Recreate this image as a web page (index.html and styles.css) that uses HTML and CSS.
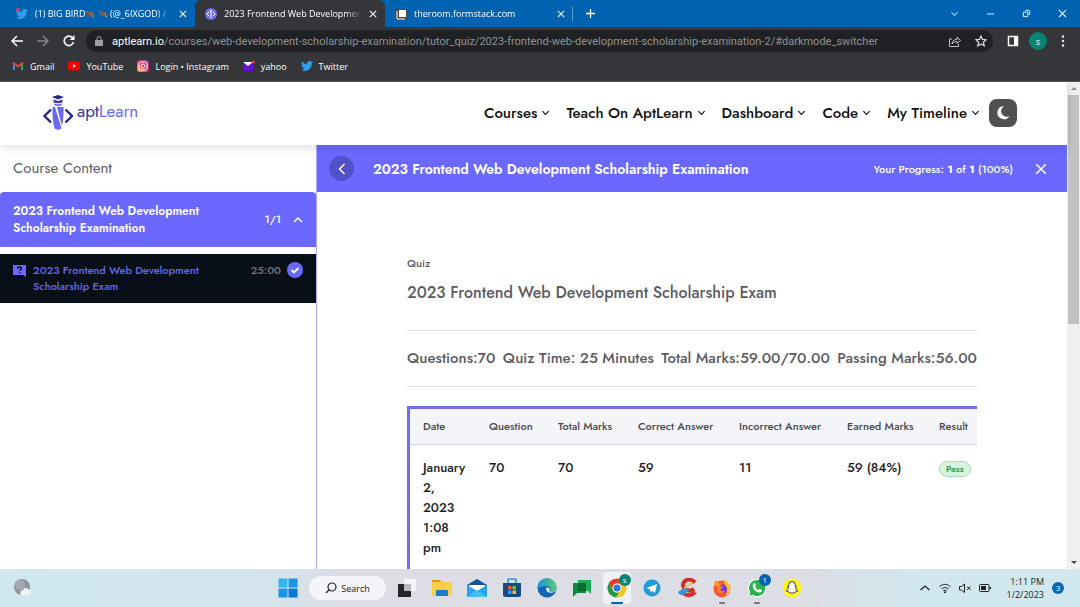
FILE: index.html
```html
<!DOCTYPE html>
<html lang="en">
<head>
    <meta charset="UTF-8">
    <meta name="viewport" content="width=device-width, initial-scale=1.0">
    <title>2023 Frontend Web Development Scholarship Exam</title>
    <link rel="stylesheet" href="styles.css">
</head>
<body>
    <!-- Shared symbols -->
    <svg class="symbols" aria-hidden="true">
        <symbol id="down" viewBox="0 0 10 10"><path d="M1.5 3.5 5 7l3.5-3.5" fill="none" stroke="currentColor" stroke-width="1.3"/></symbol>
        <symbol id="close" viewBox="0 0 10 10"><path d="m1 1 8 8M9 1 1 9" fill="none" stroke="currentColor" stroke-width="1.3"/></symbol>
        <symbol id="bird" viewBox="0 0 24 24"><path fill="#2d9fe8" d="M24 4.6a10 10 0 0 1-2.8.8 5 5 0 0 0 2.1-2.7 10 10 0 0 1-3.1 1.2 4.9 4.9 0 0 0-8.4 4.5A14 14 0 0 1 1.7 3.1a4.9 4.9 0 0 0 1.5 6.6 5 5 0 0 1-2.2-.6 4.9 4.9 0 0 0 3.9 4.9 5 5 0 0 1-2.2.1 4.9 4.9 0 0 0 4.6 3.4A9.9 9.9 0 0 1 0 19.5 14 14 0 0 0 21.500 7.100 10 10 0 0 0 24 4.600z"/></symbol>
        <symbol id="eagle" viewBox="0 0 12 12"><path fill="#84594a" d="M0 3q2-2 4 0l1 1q1-1 3-.5L10 5l2 .5-2 1 1 4-3-2-1 1-2-2-3 1 1.500-2.500Q1 5 0 3z"/><path fill="#c98b6b" d="m8 4 2 1-2 1zM8 8.500l3 2-1-3z"/></symbol>
    </svg>

    <header class="browser">
        <div class="tabs">
            <div class="tab">
                <svg class="fav" viewBox="0 0 12 12"><use href="#bird"/><circle cx="2" cy="2" r="2" fill="#d23d72"/></svg>
                <span class="tab-title">(1) BIG BIRD<svg class="emoji"><use href="#eagle"/></svg> <svg class="emoji"><use href="#eagle"/></svg> (@_6IXGOD) /</span>
                <button class="tab-close" aria-label="Close tab"><svg><use href="#close"/></svg></button>
            </div>
            <div class="tab active">
                <svg class="fav" viewBox="0 0 12 12"><circle cx="6" cy="6" r="6" fill="#7472ef"/><path d="M4 4 2 6l2 2M8 4l2 2-2 2M6 2v8M5 3h2" fill="none" stroke="#fff"/></svg>
                <span class="tab-title">2023 Frontend Web Development</span>
                <button class="tab-close" aria-label="Close tab"><svg><use href="#close"/></svg></button>
            </div>
            <div class="tab last">
                <svg class="fav" viewBox="0 0 12 12"><rect x="1" y="1" width="11" height="11" rx="1" fill="#54433c"/><path d="M4 2h7v7H4z" fill="#fff"/><path d="M2 3v8h8" fill="none" stroke="#fff"/></svg>
                <span class="tab-title">theroom.formstack.com</span>
                <button class="tab-close" aria-label="Close tab"><svg><use href="#close"/></svg></button>
            </div>
            <button class="new-tab" aria-label="New tab"><svg viewBox="0 0 10 10"><path d="M5 0v10M0 5h10" stroke="#fff" stroke-width="1.500"/></svg></button>
            <div class="window-buttons">
                <button class="tab-search" aria-label="Search tabs"><svg><use href="#down"/></svg></button>
                <button aria-label="Minimize"><svg viewBox="0 0 10 10"><path d="M1 5.500h8" stroke="#fff"/></svg></button>
                <button aria-label="Restore"><svg viewBox="0 0 10 10"><path d="M1.500 3.500h5v5h-5zM3.500 1.500h4a1 1 0 0 1 1 1v4" fill="none" stroke="#fff"/></svg></button>
                <button aria-label="Close"><svg><use href="#close"/></svg></button>
            </div>
        </div>

        <div class="toolbar">
            <button class="tool" aria-label="Back"><svg viewBox="0 0 12 12"><path d="M12 6H1M6 1 1 6l5 5" fill="none" stroke="#fff" stroke-width="1.500"/></svg></button>
            <button class="tool" aria-label="Forward"><svg viewBox="0 0 12 12"><path d="M0 6h11M6 1l5 5-5 5" fill="none" stroke="#85868a" stroke-width="1.500"/></svg></button>
            <button class="tool" aria-label="Reload"><svg viewBox="0 0 12 12"><path d="M10.500 7A4.700 4.700 0 1 1 9.500 2.800" fill="none" stroke="#fff" stroke-width="1.600"/><path d="M11.500 0v5h-5z" fill="#fff"/></svg></button>
            <div class="address">
                <svg class="lock" viewBox="0 0 8 10"><path d="M0 4h8v6H0z" fill="#a0a1a4"/><path d="M2 4V2.500a2 2 0 0 1 4 0V4" fill="none" stroke="#a0a1a4"/></svg>
                <label for="url">aptlearn.io</label>
                <input id="url" type="text" value="/courses/web-development-scholarship-examination/tutor_quiz/2023-frontend-web-development-scholarship-examination-2/#darkmode_switcher">
                <button class="tool" aria-label="Share"><svg viewBox="0 0 12 12"><path d="M3 4H.5v7.500h9V9M3 9c0-3 2-4.500 5-4.500V2l3.500 3.500L8 8.500V6.500C6 6.500 4.500 7 3 9z" fill="none" stroke="#c0c1c3"/></svg></button>
                <button class="tool" aria-label="Bookmark"><svg viewBox="0 0 12 12"><path d="m6 1 1.500 3.400 3.700.3-2.800 2.500.9 3.700L6 9l-3.300 1.900.9-3.700L.8 4.700l3.700-.3z" fill="none" stroke="#dcdde0" stroke-width="1.200"/></svg></button>
            </div>
            <div class="toolbar-end">
                <button class="tool" aria-label="Side panel"><svg viewBox="0 0 12 12"><path d="M1.500 1.500h9v9h-9z" fill="none" stroke="#fff" stroke-width="1.500"/><path d="M7 1h4v10H7z" fill="#fff"/></svg></button>
                <button class="profile">s</button>
                <button class="tool" aria-label="Menu"><svg viewBox="0 0 12 12" fill="#eee"><circle cx="6" cy="1.500" r="1.200"/><circle cx="6" cy="6" r="1.200"/><circle cx="6" cy="10.500" r="1.200"/></svg></button>
            </div>
        </div>

        <nav class="bookmarks">
            <a href="#"><svg viewBox="0 0 12 12"><path d="M1 2.500V10h2V5.500z" fill="#4285f4"/><path d="M11 2.500V10H9V5.500z" fill="#34a853"/><path d="M1 2.500 6 6.500l5-4" fill="none" stroke="#ea4335" stroke-width="2"/></svg>Gmail</a>
            <a href="#"><svg viewBox="0 0 12 12"><rect y="1.500" width="12" height="9" rx="2" fill="#f00"/><path d="m5 4 3 2-3 2z" fill="#fff"/></svg>YouTube</a>
            <a href="#"><svg viewBox="0 0 12 12"><defs><linearGradient id="insta" x1="0" y1="1" x2="1" y2="0"><stop offset="0" stop-color="#fdc04b"/><stop offset=".5" stop-color="#ef3564"/><stop offset="1" stop-color="#8b3fd0"/></linearGradient></defs><rect width="12" height="12" rx="3" fill="url(#insta)"/><rect x="2" y="2" width="8" height="8" rx="2.500" fill="none" stroke="#fff"/><circle cx="6" cy="6" r="1.900" fill="none" stroke="#fff"/></svg>Login • Instagram</a>
            <a href="#"><svg viewBox="0 0 12 12"><path d="M1 2h9v9H1z" fill="#6410d8"/><path d="m0 2 5 4 5-4z" fill="#fff"/><circle cx="10.500" cy="2" r="1.500" fill="#f23b3b"/></svg>yahoo</a>
            <a href="#"><svg viewBox="0 0 12 12"><use href="#bird"/></svg>Twitter</a>
        </nav>
    </header>

    <div class="viewport">
        <div class="site">
            <header class="site-header">
                <a class="logo" href="#" aria-label="aptLearn">
                    <svg viewBox="0 0 30 36">
                        <path d="m15 0 6 2-6 2.500L9 2z" fill="#28277f"/>
                        <path d="M10.500 4.500 15 6l4.500-1.500v3Q15 9 10.500 7.500z" fill="#3c3bad"/>
                        <path d="M10.500 8.500q4.500 1.500 9 0Q18.500 11 15 11t-4.500-2.500z" fill="#6a68f5"/>
                        <path d="M9.500 12H12l6.500 21.500L15 35l-3.500-1.500Q9 24 9.500 12zM14 12h6.500q.5 11-1.500 19z" fill="#6a68f5"/>
                        <path d="M8 14.500 1.500 21 8 27.500M22.500 14.500 29 21l-6.500 6.500" fill="none" stroke="#28277f" stroke-width="2.400"/>
                    </svg>
                    <span class="logo-text"><span class="dark">apt</span>Learn</span>
                </a>
                <nav class="menu">
                    <a href="#">Courses<svg><use href="#down"/></svg></a>
                    <a href="#">Teach On AptLearn<svg><use href="#down"/></svg></a>
                    <a href="#">Dashboard<svg><use href="#down"/></svg></a>
                    <a href="#">Code<svg><use href="#down"/></svg></a>
                    <a href="#">My Timeline<svg><use href="#down"/></svg></a>
                </nav>
                <button class="dark-toggle" aria-label="Dark mode"><svg viewBox="0 0 16 16"><path d="M9 1.200A6.500 6.500 0 1 0 14.500 11 5.500 5.500 0 0 1 9 1.200z" fill="#fff"/></svg></button>
            </header>

            <div class="course">
                <aside class="sidebar">
                    <h2 class="sidebar-title">Course Content</h2>
                    <button class="topic">
                        <span class="topic-name">2023 Frontend Web Development Scholarship Examination</span>
                        <span class="topic-count">1/1</span>
                        <svg viewBox="0 0 10 10"><path d="m1 7 4-4 4 4" fill="none" stroke="#fff" stroke-width="1.500"/></svg>
                    </button>
                    <a class="lesson" href="#">
                        <svg class="lesson-icon" viewBox="0 0 13 12"><path d="M0 0h13v12l-3-2H0z" fill="#6a68fa"/><path d="M4.500 3.500q0-1.500 2-1.500t2 1.500q0 1-1.500 1.500v1M7 7v1.200" fill="none" stroke="#080f19" stroke-width="1.300"/></svg>
                        <span class="lesson-name">2023 Frontend Web Development Scholarship Exam</span>
                        <span class="lesson-time">25:00</span>
                        <svg class="lesson-done" viewBox="0 0 16 16"><circle cx="8" cy="8" r="8" fill="#6a68fa"/><path d="m4.500 8 2.500 2.500 4.500-4.500" fill="none" stroke="#fff" stroke-width="1.800"/></svg>
                    </a>
                </aside>

                <main class="main">
                    <div class="course-bar">
                        <button class="back" aria-label="Back"><svg viewBox="0 0 12 12"><path d="M8.500 1 3.500 6l5 5" fill="none" stroke="#fff" stroke-width="1.500"/></svg></button>
                        <h1>2023 Frontend Web Development Scholarship Examination</h1>
                        <p class="progress">Your Progress: <b>1</b> of <b>1</b> (100%)</p>
                        <button class="exit" aria-label="Close course"><svg><use href="#close"/></svg></button>
                    </div>

                    <section class="quiz">
                        <p class="kind">Quiz</p>
                        <h2 class="quiz-title">2023 Frontend Web Development Scholarship Exam</h2>
                        <ul class="facts">
                            <li>Questions:70</li>
                            <li>Quiz Time: 25 Minutes</li>
                            <li>Total Marks:59.00/70.00</li>
                            <li>Passing Marks:56.00</li>
                        </ul>
                        <div class="attempts">
                            <table>
                                <thead>
                                    <tr>
                                        <th class="col-date">Date</th>
                                        <th class="col-question">Question</th>
                                        <th class="col-total">Total Marks</th>
                                        <th class="col-correct">Correct Answer</th>
                                        <th class="col-incorrect">Incorrect Answer</th>
                                        <th class="col-earned">Earned Marks</th>
                                        <th class="col-result">Result</th>
                                    </tr>
                                </thead>
                                <tbody>
                                    <tr>
                                        <td>January 2, 2023 1:08 pm</td>
                                        <td>70</td>
                                        <td>70</td>
                                        <td>59</td>
                                        <td>11</td>
                                        <td>59 (84%)</td>
                                        <td><span class="pass">Pass</span></td>
                                    </tr>
                                </tbody>
                            </table>
                        </div>
                    </section>
                </main>
            </div>
        </div>

        <div class="scrollbar">
            <svg viewBox="0 0 12 12"><path d="m3 7.500 3-3 3 3z" fill="#8c8c8c"/></svg>
            <div class="thumb"></div>
            <svg viewBox="0 0 12 12"><path d="m3 4.500 3 3 3-3z" fill="#444"/></svg>
        </div>
    </div>

    <footer class="taskbar">
        <button class="weather" aria-label="Weather"><svg viewBox="0 0 20 20"><circle cx="9" cy="9" r="8" fill="#8d959d"/><circle cx="7" cy="7" r="5" fill="#a3a9b0"/><path d="M8 17q-2-4 2-5 2-4 5-1 4 1 3 4-1 2-4 2z" fill="#eef5f8"/></svg></button>
        <div class="apps">
            <button class="app" aria-label="Start"><svg viewBox="0 0 20 20"><path d="M.5.5h9v9h-9z" fill="#35b4f2"/><path d="M10.500.5h9v9h-9zM.5 10.500h9v9h-9z" fill="#1c95e5"/><path d="M10.500 10.500h9v9h-9z" fill="#0878d4"/></svg></button>
            <button class="search"><svg viewBox="0 0 12 12"><circle cx="7" cy="5" r="4" fill="none" stroke="#222" stroke-width="1.200"/><path d="M4 8 1 11" stroke="#222" stroke-width="1.300"/></svg>Search</button>
            <button class="app" aria-label="Task view"><svg viewBox="0 0 20 20"><path d="M7 1h12v12H7z" fill="#f4f4f6"/><path d="M1 6h13v13H1z" fill="#252628"/><path d="M7 6h7v7H7z" fill="#b9babd"/></svg></button>
            <button class="app" aria-label="File Explorer"><svg viewBox="0 0 20 20"><path d="M0 2h8l2 3H0z" fill="#d99a16"/><path d="M0 4h20v14H0z" fill="#fbce48"/><path d="M4 13q0-1 1-1h10q1 0 1 1v5H4z" fill="#187dcc"/></svg></button>
            <button class="app" aria-label="Mail"><svg viewBox="0 0 20 20"><path d="m0 7 10-6 10 6v12H0z" fill="#12549c"/><path d="M2 7h16v6H2z" fill="#fff"/><path d="m0 7 10 6 10-6v12H0z" fill="#2aa3e8"/><path d="m0 19 10-7 10 7z" fill="#47bdf4"/></svg></button>
            <button class="app" aria-label="Store"><svg viewBox="0 0 20 20"><path d="M6 5V2q0-1 1-1h6q1 0 1 1v3" fill="none" stroke="#2793d9" stroke-width="1.600"/><path d="M1 5h18v12q0 2-2 2H3q-2 0-2-2z" fill="#174a83"/><path d="M6 8h3.500v3.500H6z" fill="#f1592a"/><path d="M10.500 8H14v3.500h-3.500z" fill="#80bb28"/><path d="M6 12.500h3.500V16H6z" fill="#1ca5ec"/><path d="M10.500 12.500H14V16h-3.500z" fill="#fdbb21"/></svg></button>
            <button class="app" aria-label="Edge"><svg viewBox="0 0 20 20"><defs><linearGradient id="edge" x1="0" y1="0" x2="1" y2="0"><stop offset="0" stop-color="#1c8fdc"/><stop offset="1" stop-color="#55cf72"/></linearGradient></defs><circle cx="10" cy="10" r="9.500" fill="#1467b8"/><path d="M.5 9.500a9.500 9.500 0 0 1 19 0c0 4-4 4.500-6.500 3.500 1-3-.500-5-3.500-5-4 0-7 2.500-9 1.500z" fill="url(#edge)"/><path d="M19 13q-3 2.500-7 1.500-4-1.500-2.500-5 2-.5 3 1 .5 1.500-.5 2.500 4 1.500 7-.500z" fill="#e4eef7"/></svg></button>
            <button class="app" aria-label="Chat"><svg viewBox="0 0 20 20"><path d="M6 2h13v14l-3-3H6z" fill="#1dac54"/><path d="M1 5h13v10H5l-4 4z" fill="#0a8a3c"/><path d="M6 5h8v8H6z" fill="#0a6b31"/></svg></button>
            <button class="app current" aria-label="Chrome"><svg viewBox="0 0 20 20"><circle cx="10" cy="10" r="9.500" fill="#fbc516"/><path d="M1.800 5.200A9.500 9.500 0 0 1 18.200 5.500H10a4.500 4.500 0 0 0-4 6.500z" fill="#e33b2e"/><path d="M1.800 5.200 6 12.200a4.500 4.500 0 0 0 6 1.900l-3 5.400A9.500 9.500 0 0 1 1.800 5.200z" fill="#239a4b"/><circle cx="10" cy="10" r="4.500" fill="#fff"/><circle cx="10" cy="10" r="3.500" fill="#2b75e5"/></svg><span class="badge teal">s</span></button>
            <button class="app" aria-label="Telegram"><svg viewBox="0 0 20 20"><circle cx="10" cy="10" r="8.500" fill="#229bd7"/><path d="m4.500 10 10.500-4-2 9-3-2.300-1.500 1.500-.5-3z" fill="#fff"/></svg></button>
            <button class="app" aria-label="CCleaner"><svg viewBox="0 0 20 20"><path d="M18 4.500Q13-.5 8 3q-4 4 0 8 4 3 9 0M18 14q-5 5-11 2" fill="none" stroke="#d62d22" stroke-width="4"/><path d="m1 14 7-5 4 3-5 5q-4 1-6-3z" fill="#3c91d2"/><path d="m7 10 9-5" stroke="#efb66a" stroke-width="2"/></svg></button>
            <button class="app running" aria-label="Firefox"><svg viewBox="0 0 20 20"><circle cx="10" cy="11" r="8.500" fill="#ff5438"/><path d="M13 1q1 2 3 4 3 4 2 8-2 5-6 5.500 4-3 3-8-2-4-3-5.500 0-2 1-4z" fill="#ffc42e"/><path d="M2 7q0-3 2-5 1 2 3 3l3 1-3 3z" fill="#ff9b23"/><circle cx="10.500" cy="11" r="4.500" fill="#7440d4"/><path d="M5 9q3-2 6 0-1 2-3 2 1 3 5 2-2 3-5 2-4-1-3-6z" fill="#ff8123"/></svg></button>
            <button class="app running" aria-label="WhatsApp"><svg viewBox="0 0 20 20"><path d="M10 1a9 9 0 0 0-7.800 13.500L1 19l4.700-1.200A9 9 0 1 0 10 1z" fill="#fff"/><path d="M10 2a8 8 0 0 0-6.800 12.200L2.300 17.700l3.500-1A8 8 0 1 0 10 2z" fill="#29b44e"/><path d="M6.500 5.500 8 5l1.200 2.800-1 1.200q1 2 3 3l1.200-1.200 2.600 1.200q0 2.500-2.500 2.500Q8 14 6 9.500q-.800-2.500.500-4z" fill="#fff"/></svg><span class="badge blue">1</span></button>
            <button class="app" aria-label="Snapchat"><svg viewBox="0 0 20 20"><circle cx="10" cy="10" r="9.500" fill="#fff41c"/><path d="M10 3.500q3 0 3.300 3v2l1.200.2-1 1.300q.5 2 2.500 2.700l-2 1-1.500.8q-1.200 0-2.500 1-1.300-1-2.500-1L6 13.700l-2-1q2-.7 2.500-2.700l-1-1.300 1.200-.2v-2q.300-3 3.300-3z" fill="#fff" stroke="#333"/></svg></button>
        </div>
        <div class="tray">
            <svg viewBox="0 0 12 12"><path d="m1.500 8 4.500-4 4.500 4" fill="none" stroke="#222" stroke-width="1.300"/></svg>
            <svg viewBox="0 0 12 12"><path d="M.5 4.500q5.500-4.500 11 0M2.500 6.800q3.500-3 7 0M4.200 8.800q1.800-1.500 3.600 0" fill="none" stroke="#333"/><circle cx="6" cy="10.200" r="1" fill="#222"/></svg>
            <svg viewBox="0 0 12 12"><path d="M.5 4.500h2L5.500 2v8.500L2.500 8h-2zM8 4.500l3.500 3.500M11.500 4.500 8 8" fill="none" stroke="#222"/></svg>
            <svg viewBox="0 0 12 12"><rect x=".5" y="2.500" width="9.500" height="7" rx="1" fill="none" stroke="#222"/><path d="M2 4h5v4H2zM10.500 5H12v2h-1.500z" fill="#222"/></svg>
            <div class="clock">1:11 PM<br>1/2/2023</div>
            <button class="notices">3</button>
        </div>
    </footer>
</body>
</html>
```
FILE: styles.css
```css
* {
    box-sizing: border-box;
}

body {
    margin: 0;
    height: 100vh;
    display: flex;
    flex-direction: column;
    overflow: hidden;
    font-family: "Jost", "Lato", sans-serif;
    background-color: #fff;
}

button {
    padding: 0;
    border: none;
    background: none;
    font: inherit;
    color: inherit;
    cursor: pointer;
}

a {
    color: inherit;
    text-decoration: none;
}

h1, h2, p, ul {
    margin: 0;
    padding: 0;
    font-weight: 500;
}

svg {
    display: block;
    flex: none;
}

.symbols {
    position: absolute;
    width: 0;
    height: 0;
}

/* Browser window */
.browser {
    flex: none;
    background-color: #35363a;
    color: #fff;
    font-family: "Segoe UI", "Open Sans", sans-serif;
    font-size: 9px;
    border-bottom: 1px solid #555;
}

.tabs {
    display: flex;
    align-items: center;
    height: 27px;
    background-color: #0063b1;
}

.tab {
    display: flex;
    align-items: center;
    gap: 7px;
    width: 195px;
    height: 27px;
    padding: 0 6px 0 16px;
}

.tab.active {
    width: 190px;
    padding-left: 10px;
    background-color: #35363a;
    border-radius: 6px 6px 0 0;
}

.tab.last {
    width: 188px;
    padding: 0 0 0 10px;
}

.tab.last::after {
    content: "";
    width: 1px;
    height: 14px;
    background-color: #5c9bd0;
}

.fav {
    width: 12px;
    height: 12px;
}

.tab-title {
    flex: 1;
    overflow: hidden;
    white-space: nowrap;
    mask-image: linear-gradient(to right, #000 88%, transparent);
}

.emoji {
    display: inline-block;
    width: 10px;
    height: 10px;
    vertical-align: -2px;
}

.tab-close,
.tab-close svg {
    width: 8px;
    height: 8px;
}

.tab-close {
    margin-right: 2px;
}

.tab.last .tab-close {
    margin-right: 0;
}

.new-tab {
    margin-left: 13px;
}

.new-tab svg {
    width: 9px;
    height: 9px;
}

.window-buttons {
    display: flex;
    margin-left: auto;
}

.window-buttons button {
    display: grid;
    place-items: center;
    width: 36px;
    height: 22px;
}

.window-buttons svg {
    width: 9px;
    height: 9px;
}

.window-buttons .tab-search {
    color: #9cc8ee;
}

.toolbar {
    display: flex;
    align-items: center;
    gap: 14px;
    height: 28px;
    padding: 0 11px;
}

.toolbar-end {
    display: flex;
    align-items: center;
    gap: 10px;
}

.tool svg {
    width: 12px;
    height: 12px;
}

.address {
    flex: 1;
    display: flex;
    align-items: center;
    height: 22px;
    margin-left: -3px;
    padding: 0 6px 0 9px;
    border-radius: 11px;
    background-color: #202124;
    font-family: "Segoe UI", Roboto, sans-serif;
    font-size: 11px;
}

.address label {
    margin-left: 9px;
}

.address input {
    flex: 1;
    min-width: 0;
    padding: 0;
    border: none;
    outline: none;
    background: none;
    color: #8f9194;
    font: inherit;
}

.address .tool + .tool {
    margin-left: 14px;
}

.lock {
    width: 8px;
    height: 10px;
}

.profile {
    width: 18px;
    height: 18px;
    border-radius: 50%;
    background-color: #0b8473;
    font-size: 9px;
}

.bookmarks {
    display: flex;
    align-items: center;
    gap: 14px;
    height: 26px;
    padding: 0 12px 4px;
}

.bookmarks a {
    display: flex;
    align-items: center;
    gap: 6px;
}

.bookmarks svg {
    width: 12px;
    height: 12px;
}

/* Website */
.viewport {
    flex: 1;
    min-height: 0;
    display: flex;
    overflow: hidden;
}

.site {
    flex: 1;
    min-width: 0;
    display: flex;
    flex-direction: column;
}

.site-header {
    position: relative;
    z-index: 1;
    flex: none;
    display: flex;
    align-items: center;
    height: 63px;
    padding: 0 50px 2px 43px;
    background-color: #fff;
    box-shadow: 0 2px 10px rgba(0, 0, 0, 0.13);
}

.logo {
    display: flex;
    align-items: center;
    gap: 4px;
}

.logo > svg {
    width: 30px;
    height: 36px;
}

.logo-text {
    padding-bottom: 4px;
    color: #6a68f5;
    font-size: 17px;
}

.logo-text .dark {
    color: #3533a0;
}

.menu {
    display: flex;
    gap: 16px;
    margin-left: auto;
    color: #111;
    font-size: 15px;
    font-weight: 500;
}

.menu a {
    display: flex;
    align-items: center;
    gap: 4px;
}

.menu svg {
    width: 9px;
    height: 9px;
}

.dark-toggle {
    display: grid;
    place-items: center;
    width: 28px;
    height: 28px;
    margin-left: 9px;
    border-radius: 8px;
    background-color: #505050;
}

.dark-toggle svg {
    width: 16px;
    height: 16px;
}

.course {
    flex: 1;
    min-height: 0;
    display: flex;
}

.sidebar {
    flex: none;
    width: 316px;
}

.sidebar-title {
    padding-left: 13px;
    color: #5b5b5f;
    font-size: 15px;
    font-weight: 400;
    line-height: 46px;
    padding-bottom: 1px;
}

.topic {
    display: flex;
    align-items: center;
    width: 100%;
    height: 55px;
    padding: 0 13px;
    border-radius: 4px 4px 0 0;
    background-color: #6a68ff;
    color: #fff;
    font-size: 12px;
    font-weight: 600;
    line-height: 17px;
    text-align: left;
}

.topic-name {
    max-width: 210px;
    margin-right: auto;
}

.topic-count {
    margin-right: 12px;
    font-size: 11px;
    font-weight: 500;
}

.topic svg {
    width: 10px;
    height: 10px;
}

.lesson {
    display: flex;
    align-items: flex-start;
    height: 49px;
    margin-top: 7px;
    padding: 8px 13px;
    background-color: #080f19;
    color: #6a68fa;
    font-size: 11px;
    font-weight: 500;
    line-height: 16px;
}

.lesson-icon {
    width: 13px;
    height: 12px;
    margin: 3px 7px 0 0;
}

.lesson-name {
    max-width: 185px;
    margin-right: auto;
}

.lesson-time {
    margin-right: 6px;
    color: #77797e;
}

.lesson-done {
    width: 16px;
    height: 16px;
}

.main {
    flex: 1;
    min-width: 0;
    overflow: hidden;
    border-left: 1px solid #a9a8f3;
}

.course-bar {
    display: flex;
    align-items: center;
    height: 47px;
    margin-left: -1px;
    padding: 0 20px 0 13px;
    background-color: #6a68ff;
    color: #fff;
}

.back {
    display: grid;
    place-items: center;
    width: 25px;
    height: 25px;
    border-radius: 50%;
    background-color: #5351c8;
}

.back svg {
    width: 12px;
    height: 12px;
}

.course-bar h1 {
    margin: 0 auto 0 19px;
    font-size: 14px;
    font-weight: 600;
}

.progress {
    font-size: 11px;
}

.progress b {
    font-weight: 700;
}

.exit {
    margin-left: 22px;
}

.exit svg {
    width: 12px;
    height: 12px;
}

.quiz {
    padding: 63px 12% 0;
    color: #5b5b5f;
}

.kind {
    font-size: 11px;
    font-weight: 500;
    line-height: 16px;
}

.quiz-title {
    margin-top: 11px;
    font-size: 16px;
    font-weight: 500;
    line-height: 22px;
}

.facts {
    display: flex;
    justify-content: space-between;
    margin: 26px 0 19px;
    border-top: 1px solid #dfdfe2;
    border-bottom: 1px solid #dfdfe2;
    font-size: 15px;
    line-height: 55px;
    list-style: none;
    white-space: nowrap;
}

.attempts {
    overflow: hidden;
}

.attempts table {
    table-layout: fixed;
    width: 600px;
    border-top: 3px solid #6f6df0;
    border-left: 3px solid #6f6df0;
    border-spacing: 0;
}

.attempts th {
    height: 36px;
    padding: 0 0 2px 13px;
    border-bottom: 1px solid #d0d4de;
    background-color: #f4f5f9;
    color: #48484e;
    font-size: 11px;
    font-weight: 500;
    text-align: left;
    white-space: nowrap;
}

.attempts td {
    height: 138px;
    padding: 13px;
    color: #1c1c20;
    font-size: 13px;
    font-weight: 500;
    line-height: 20px;
    vertical-align: top;
}

.col-date { width: 66px; }
.col-question { width: 69px; }
.col-total { width: 80px; }
.col-correct { width: 101px; }
.col-incorrect { width: 108px; }
.col-earned { width: 92px; }

.pass {
    display: inline-block;
    padding: 0 6px;
    border: 1px solid #a9dcb6;
    border-radius: 8px;
    background-color: #d8f2df;
    color: #2ba24c;
    font-size: 9px;
    font-weight: 600;
    line-height: 14px;
}

.scrollbar {
    flex: none;
    display: flex;
    flex-direction: column;
    align-items: center;
    width: 13px;
    background-color: #f0f0f1;
}

.scrollbar svg {
    width: 12px;
    height: 13px;
}

.thumb {
    width: 11px;
    height: 47%;
    margin-bottom: auto;
    background-color: #c1c1c1;
}

/* Windows taskbar */
.taskbar {
    flex: none;
    display: grid;
    grid-template-columns: 1fr auto 1fr;
    align-items: center;
    height: 38px;
    background: linear-gradient(to right, #cfe8ee, #d3e4ec 24%, #dcdde5 32%, #dcdde5 75%, #d0e8ee 86%);
    font-family: "Segoe UI", "Open Sans", sans-serif;
    font-size: 9px;
    color: #222;
}

.weather {
    justify-self: start;
    margin-left: 13px;
}

.weather svg {
    width: 20px;
    height: 20px;
}

.apps {
    display: flex;
    align-items: center;
    gap: 7px;
}

.app {
    position: relative;
    display: grid;
    place-items: center;
    width: 28px;
    height: 32px;
}

.app svg {
    width: 20px;
    height: 20px;
}

.app.current {
    border-radius: 3px;
    background-color: #f0f1f5;
}

.app.current::after,
.app.running::after {
    content: "";
    position: absolute;
    bottom: 0;
    width: 6px;
    height: 2px;
    border-radius: 1px;
    background-color: #777;
}

.app.current::after {
    width: 12px;
    background-color: #0863ac;
}

.badge {
    position: absolute;
    top: 2px;
    right: 0;
    width: 12px;
    height: 12px;
    border-radius: 50%;
    color: #fff;
    font-size: 8px;
    line-height: 12px;
}

.teal {
    background-color: #0b8473;
}

.blue {
    background-color: #0861b0;
}

.search {
    display: flex;
    align-items: center;
    gap: 4px;
    height: 24px;
    padding: 0 16px;
    border-radius: 12px;
    background-color: #f3f5f9;
}

.search svg {
    width: 12px;
    height: 12px;
}

.tray {
    display: flex;
    align-items: center;
    justify-self: end;
    gap: 8px;
    margin-right: 16px;
}

.tray svg {
    width: 12px;
    height: 12px;
}

.clock {
    margin-left: 8px;
    line-height: 13px;
    text-align: right;
}

.notices {
    width: 12px;
    height: 12px;
    border-radius: 50%;
    background-color: #0a66b5;
    color: #fff;
    font-size: 8px;
    line-height: 12px;
}
```
